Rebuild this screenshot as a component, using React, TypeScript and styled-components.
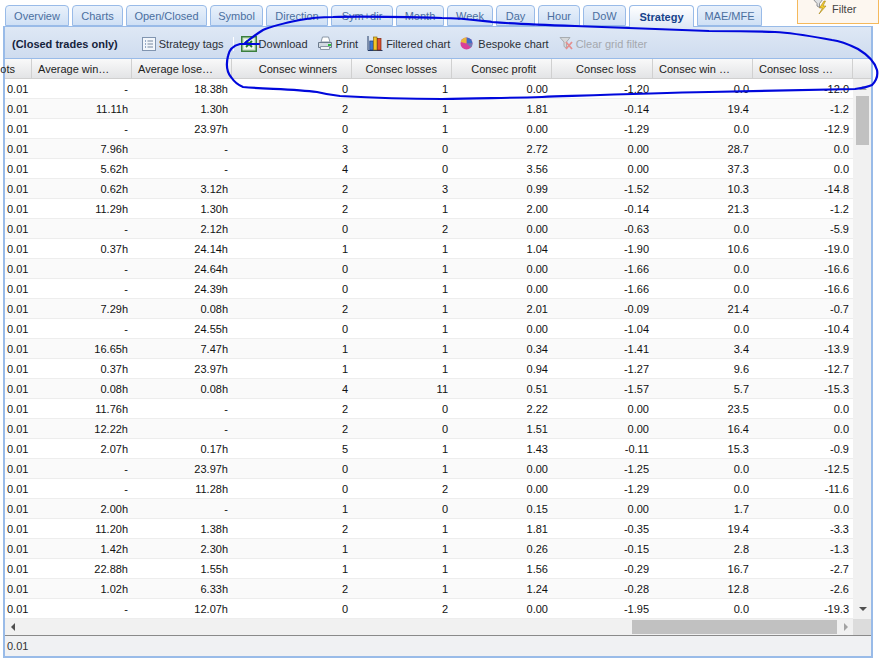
import styled, { createGlobalStyle } from "styled-components";

const GlobalStyle = createGlobalStyle`
    html, body {
        margin: 0;
        padding: 0;
        background: #fff;
    }

    body {
        width: 884px;
        height: 665px;
        overflow: hidden;
        font-family: "Liberation Sans", Arial, sans-serif;
        font-size: 11px;
        color: #000;
    }
`;

const COLUMNS = "27px 100px 100px 120px 100px 100px 101px 100px 100px";

const TABS = [
    { label: "Overview", width: 64 },
    { label: "Charts", width: 51 },
    { label: "Open/Closed", width: 81 },
    { label: "Symbol", width: 53 },
    { label: "Direction", width: 62 },
    { label: "Sym+dir", width: 62 },
    { label: "Month", width: 48 },
    { label: "Week", width: 46 },
    { label: "Day", width: 39 },
    { label: "Hour", width: 42 },
    { label: "DoW", width: 43 },
    { label: "Strategy", width: 65, active: true },
    { label: "MAE/MFE", width: 65 },
];

// left: padding from the left edge, right: padding from the right edge
const HEADERS: { label: string; left?: number; right?: number }[] = [
    { label: "ots", right: 16 },
    { label: "Average win…", left: 6 },
    { label: "Average lose…", left: 6 },
    { label: "Consec winners", right: 14 },
    { label: "Consec losses", right: 14 },
    { label: "Consec profit", right: 15 },
    { label: "Consec loss", right: 16 },
    { label: "Consec win …", left: 6 },
    { label: "Consec loss …", left: 6 },
];

const ROWS = [
    ["-", "18.38h", "0", "1", "0.00", "-1.20", "0.0", "-12.0"],
    ["11.11h", "1.30h", "2", "1", "1.81", "-0.14", "19.4", "-1.2"],
    ["-", "23.97h", "0", "1", "0.00", "-1.29", "0.0", "-12.9"],
    ["7.96h", "-", "3", "0", "2.72", "0.00", "28.7", "0.0"],
    ["5.62h", "-", "4", "0", "3.56", "0.00", "37.3", "0.0"],
    ["0.62h", "3.12h", "2", "3", "0.99", "-1.52", "10.3", "-14.8"],
    ["11.29h", "1.30h", "2", "1", "2.00", "-0.14", "21.3", "-1.2"],
    ["-", "2.12h", "0", "2", "0.00", "-0.63", "0.0", "-5.9"],
    ["0.37h", "24.14h", "1", "1", "1.04", "-1.90", "10.6", "-19.0"],
    ["-", "24.64h", "0", "1", "0.00", "-1.66", "0.0", "-16.6"],
    ["-", "24.39h", "0", "1", "0.00", "-1.66", "0.0", "-16.6"],
    ["7.29h", "0.08h", "2", "1", "2.01", "-0.09", "21.4", "-0.7"],
    ["-", "24.55h", "0", "1", "0.00", "-1.04", "0.0", "-10.4"],
    ["16.65h", "7.47h", "1", "1", "0.34", "-1.41", "3.4", "-13.9"],
    ["0.37h", "23.97h", "1", "1", "0.94", "-1.27", "9.6", "-12.7"],
    ["0.08h", "0.08h", "4", "11", "0.51", "-1.57", "5.7", "-15.3"],
    ["11.76h", "-", "2", "0", "2.22", "0.00", "23.5", "0.0"],
    ["12.22h", "-", "2", "0", "1.51", "0.00", "16.4", "0.0"],
    ["2.07h", "0.17h", "5", "1", "1.43", "-0.11", "15.3", "-0.9"],
    ["-", "23.97h", "0", "1", "0.00", "-1.25", "0.0", "-12.5"],
    ["-", "11.28h", "0", "2", "0.00", "-1.29", "0.0", "-11.6"],
    ["2.00h", "-", "1", "0", "0.15", "0.00", "1.7", "0.0"],
    ["11.20h", "1.38h", "2", "1", "1.81", "-0.35", "19.4", "-3.3"],
    ["1.42h", "2.30h", "1", "1", "0.26", "-0.15", "2.8", "-1.3"],
    ["22.88h", "1.55h", "1", "1", "1.56", "-0.29", "16.7", "-2.7"],
    ["1.02h", "6.33h", "2", "1", "1.24", "-0.28", "12.8", "-2.6"],
    ["-", "12.07h", "0", "2", "0.00", "-1.95", "0.0", "-19.3"],
];

function TagsIcon() {
    return (
        <svg width="14" height="14" viewBox="0 0 14 14">
            <rect x="0.5" y="0.5" width="13" height="13" fill="#f2f6fb" stroke="#8195b0" />
            <path d="M3 4h1M3 7h1M3 10h1" stroke="#3f6396" />
            <path d="M5.5 4h5.5M5.5 7h5.5M5.5 10h5.5" stroke="#76889f" />
        </svg>
    );
}

function ExcelIcon() {
    return (
        <svg width="16" height="16" viewBox="0 0 16 16">
            <rect x="0.75" y="0.75" width="14.5" height="14.5" fill="#cfe4cd" stroke="#3a7f3d" strokeWidth="1.5" />
            <rect x="3" y="3" width="10" height="10" fill="#eef7ec" />
            <path d="M5 5l6 6M11 5l-6 6" stroke="#1f7a28" strokeWidth="1.8" />
        </svg>
    );
}

function PrintIcon() {
    return (
        <svg width="16" height="15" viewBox="0 0 16 15">
            <path d="M5.5 1h6l1.5 5H4z" fill="#fff" stroke="#8a97a6" />
            <path d="M1.5 6.5h13v5h-13z" fill="#d3dae2" stroke="#6b7a8c" />
            <path d="M3.5 10.5h9v3h-9z" fill="#f4f6f8" stroke="#8a97a6" />
            <rect x="11" y="8" width="3" height="2" fill="#2fbf3d" />
        </svg>
    );
}

function BarsIcon() {
    return (
        <svg width="16" height="17" viewBox="0 0 16 17">
            <path d="M1 1v14.5h14.5" fill="none" stroke="#223a66" />
            <rect x="2.8" y="6" width="3.4" height="9" fill="#3f78cf" stroke="#1d3a73" strokeWidth="0.7" />
            <rect x="6.6" y="2" width="3.4" height="13" fill="#f3c326" stroke="#8a6d10" strokeWidth="0.7" />
            <rect x="10.6" y="3.5" width="3.4" height="11.5" fill="#e0502e" stroke="#7d2510" strokeWidth="0.7" />
        </svg>
    );
}

function PieIcon() {
    return (
        <svg width="13" height="13" viewBox="0 0 13 13">
            <circle cx="6.5" cy="6.5" r="6" fill="#d83f9a" />
            <path d="M6.5 6.5L6.5 .5A6 6 0 0 1 12.5 6.5z" fill="#3f6fc4" />
            <path d="M6.5 6.5L.7 5A6 6 0 0 1 6.5 .5z" fill="#e8b93a" />
            <path d="M6.5 6.5L12.5 6.5A6 6 0 0 1 11 10.5z" fill="#6d7fb5" />
        </svg>
    );
}

function ClearFilterIcon() {
    return (
        <svg width="15" height="15" viewBox="0 0 15 15">
            <path d="M1 1.5h10L7.5 6v6L5 10.5V6z" fill="#d6d8da" stroke="#a8acb0" />
            <path d="M7 6l6 7M13 6l-6 7" stroke="#e58f8f" strokeWidth="1.8" />
        </svg>
    );
}

function FilterIcon() {
    return (
        <svg width="16" height="16" viewBox="0 0 16 16">
            <path d="M1 0h10L7.5 4.5v4L5 7V4.5z" fill="#dfe1e3" stroke="#77797c" strokeWidth="0.8" />
            <path d="M12 2L7.5 9h3l-3.5 6 7-8h-3l2.5-5z" fill="#f3cc2e" stroke="#a4831a" strokeWidth="0.6" />
        </svg>
    );
}

function App() {
    return (
        <Page>
            <GlobalStyle />
            <TopBar>
                <TabStrip>
                    {TABS.map((tab) => (
                        <Tab key={tab.label} $width={tab.width} $active={tab.active}>
                            {tab.label}
                        </Tab>
                    ))}
                </TabStrip>
                <FilterButton>
                    <FilterIcon />
                    Filter
                </FilterButton>
            </TopBar>

            <Panel>
                <Toolbar>
                    <ToolbarTitle>(Closed trades only)</ToolbarTitle>
                    <ToolButton><TagsIcon />Strategy tags</ToolButton>
                    <ToolDivider />
                    <ToolButton $gap={2}><ExcelIcon />Download</ToolButton>
                    <ToolButton><PrintIcon />Print</ToolButton>
                    <ToolButton><BarsIcon />Filtered chart</ToolButton>
                    <ToolButton $gap={5} $before={1}><PieIcon />Bespoke chart</ToolButton>
                    <ToolButton $gap={2} $before={1} $disabled><ClearFilterIcon />Clear grid filter</ToolButton>
                </Toolbar>

                <HeaderRow>
                    {HEADERS.map((header) => (
                        <HeaderCell key={header.label} $left={header.left} $right={header.right}>
                            {header.label}
                        </HeaderCell>
                    ))}
                    <HeaderFiller />
                </HeaderRow>

                <GridBody>
                    <Rows>
                        {ROWS.map((row, index) => (
                            <Row key={index} $odd={index % 2 === 1}>
                                <LotCell>0.01</LotCell>
                                {row.map((value, cellIndex) => (
                                    <Cell key={cellIndex}>{value}</Cell>
                                ))}
                            </Row>
                        ))}
                    </Rows>
                    <VScroll>
                        <ArrowUp />
                        <VThumb />
                        <ArrowDown />
                    </VScroll>
                </GridBody>

                <HScrollRow>
                    <HScroll>
                        <ArrowLeft />
                        <HThumb />
                        <ArrowRight />
                    </HScroll>
                    <ScrollCorner />
                </HScrollRow>

                <SummaryRow>0.01</SummaryRow>
            </Panel>

            <Annotation width="884" height="665" viewBox="0 0 884 665">
                <path
                    d="M259 44 C252 44 246 44 240 44 C232 46 229 50 228 56 C226 64 227 72 231 77 C235 83 238 85 243 87 C265 89 295 89 317 92 C325 94 330 95 340 96 C375 98 410 99 442 99 C480 98 510 98 542 97 C600 95 650 93 709 92 C760 91 810 90 855 89 C862 88 868 87 872 85 C876 81 878 75 877 70 C875 63 868 55 858 49 C850 45 842 41 832 40 C815 37 795 33 775 32 C755 31 730 31 709 31 C665 29 620 28 575 26 C545 25 515 24 492 22 C475 20 460 18 442 18 C405 17 365 16 333 17 C320 17 310 18 300 20 C285 23 272 26 263 30 C255 35 250 39 245 43"
                    fill="none"
                    stroke="#0008dc"
                    strokeWidth="2.2"
                    strokeLinecap="round"
                />
            </Annotation>
        </Page>
    );
}

export default App;

const Page = styled.div`
    position: relative;
    width: 884px;
    height: 665px;
    padding: 0 0 0 3px;
    box-sizing: border-box;
`;

const TopBar = styled.div`
    display: flex;
    height: 26px;
`;

const TabStrip = styled.div`
    display: flex;
    align-items: flex-end;
    gap: 3px;
    padding-left: 2px;
    width: 792px;
`;

const Tab = styled.div<{ $width: number; $active?: boolean }>`
    width: ${(p) => p.$width}px;
    flex: none;
    height: ${(p) => (p.$active ? 22 : 21)}px;
    box-sizing: border-box;
    display: flex;
    align-items: center;
    justify-content: center;
    border: 1px solid #99bbe8;
    border-bottom: ${(p) => (p.$active ? "none" : "1px solid #99bbe8")};
    border-radius: 4px 4px 0 0;
    background: ${(p) => (p.$active ? "linear-gradient(#fff, #dfe9f6)" : "linear-gradient(#e9f1fb, #cfe0f5)")};
    color: ${(p) => (p.$active ? "#15428b" : "#4b6f9f")};
    font-weight: ${(p) => (p.$active ? 700 : 400)};
    margin-bottom: ${(p) => (p.$active ? -1 : 0)}px;
    position: relative;
    z-index: ${(p) => (p.$active ? 1 : 0)};
`;

const FilterButton = styled.div`
    width: 82px;
    height: 24px;
    box-sizing: border-box;
    display: flex;
    align-items: center;
    padding: 0 0 5px 14px;
    gap: 4px;
    border: 1px solid #f5b95c;
    border-top: none;
    background: #fdf7f0;
    color: #444;

    svg {
        margin-top: -4px;
    }
`;

const Panel = styled.div`
    width: 870px;
    height: 632px;
    box-sizing: border-box;
    border: 2px solid #99bbe8;
    border-top-width: 1px;
    background: #fff;
    display: flex;
    flex-direction: column;
`;

const Toolbar = styled.div`
    height: 32px;
    flex: none;
    box-sizing: border-box;
    display: flex;
    align-items: center;
    gap: 9px;
    padding: 2px 0 0 7px;
    background: linear-gradient(#dee8f5, #cfdcef);
    border-bottom: 1px solid #99bbe8;
    color: #333;
`;

const ToolbarTitle = styled.span`
    font-weight: 700;
    color: #15233c;
    margin-right: 15px;
`;

const ToolButton = styled.span<{ $gap?: number; $before?: number; $disabled?: boolean }>`
    display: inline-flex;
    align-items: center;
    gap: ${(p) => p.$gap ?? 3}px;
    margin-left: ${(p) => p.$before ?? 0}px;
    white-space: nowrap;
    color: ${(p) => (p.$disabled ? "#a4a8ae" : "#2b2f36")};
`;

const ToolDivider = styled.span`
    width: 1px;
    height: 14px;
    margin-right: -2px;
    background: #fff;
`;

const HeaderRow = styled.div`
    display: grid;
    grid-template-columns: ${COLUMNS} 1fr;
    height: 20px;
    flex: none;
    background: linear-gradient(#f9f9f9, #e3e4e6);
    border-bottom: 1px solid #d0d0d0;
    box-sizing: border-box;
`;

const HeaderCell = styled.div<{ $left?: number; $right?: number }>`
    display: flex;
    align-items: center;
    box-sizing: border-box;
    white-space: nowrap;
    border-right: 1px solid #d0d0d0;
    color: #222;
    justify-content: ${(p) => (p.$left !== undefined ? "flex-start" : "flex-end")};
    padding: 0 ${(p) => p.$right ?? 0}px 0 ${(p) => p.$left ?? 0}px;
`;

const HeaderFiller = styled.div``;

const GridBody = styled.div`
    display: flex;
    flex: none;
    height: 540px;
`;

const Rows = styled.div`
    width: 848px;
    overflow: hidden;
`;

const Row = styled.div<{ $odd: boolean }>`
    display: grid;
    grid-template-columns: ${COLUMNS};
    height: 20px;
    box-sizing: border-box;
    border-bottom: 1px solid #ededed;
    background: ${(p) => (p.$odd ? "#fafafa" : "#fff")};
`;

const Cell = styled.div`
    display: flex;
    align-items: center;
    justify-content: flex-end;
    padding-right: 4px;
    white-space: nowrap;
    color: #111;
`;

const LotCell = styled(Cell)`
    justify-content: flex-start;
    padding: 0 0 0 2px;
`;

const VScroll = styled.div`
    position: relative;
    flex: 1;
    background: #f1f1f1;
`;

const VThumb = styled.div`
    position: absolute;
    top: 17px;
    left: 3px;
    width: 13px;
    height: 49px;
    background: #c1c1c1;
`;

const ArrowUp = styled.div`
    position: absolute;
    top: 7px;
    left: 6px;
    border: 4px solid transparent;
    border-top: none;
    border-bottom: 4px solid #a3a3a3;
`;

const ArrowDown = styled.div`
    position: absolute;
    bottom: 8px;
    left: 6px;
    border: 4px solid transparent;
    border-bottom: none;
    border-top: 4px solid #505050;
`;

const HScrollRow = styled.div`
    display: flex;
    height: 16px;
    flex: none;
`;

const HScroll = styled.div`
    position: relative;
    width: 848px;
    background: #f1f1f1;
`;

const HThumb = styled.div`
    position: absolute;
    top: 1px;
    left: 627px;
    width: 205px;
    height: 14px;
    background: #c1c1c1;
`;

const ArrowLeft = styled.div`
    position: absolute;
    top: 4px;
    left: 6px;
    border: 4px solid transparent;
    border-left: none;
    border-right: 4px solid #505050;
`;

const ArrowRight = styled.div`
    position: absolute;
    top: 4px;
    left: 839px;
    border: 4px solid transparent;
    border-right: none;
    border-left: 4px solid #a3a3a3;
`;

const ScrollCorner = styled.div`
    flex: 1;
    background: #dcdcdc;
`;

const SummaryRow = styled.div`
    flex: 1;
    display: flex;
    align-items: center;
    padding-left: 2px;
    background: #f0f1f3;
    border-top: 1px solid #8a8a8a;
    color: #333;
`;

const Annotation = styled.svg`
    position: absolute;
    top: 0;
    left: 0;
    pointer-events: none;
`;
